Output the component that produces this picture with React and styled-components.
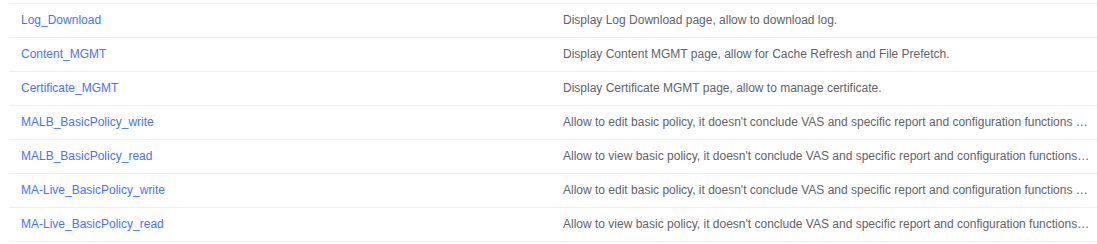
import React from "react";
import styled, { createGlobalStyle } from "styled-components";

const Global = createGlobalStyle`
  html, body { margin: 0; padding: 0; background: #fff; }
  body { font-family: "Liberation Sans", Arial, sans-serif; }
`;

const Wrap = styled.div`
  padding: 3px 0 0 9px;
`;

const Table = styled.div`
  width: 1088px;
  border-top: 1px solid #ebeef5;
`;

const Row = styled.div`
  display: grid;
  grid-template-columns: 542px 1fr;
  height: 33px;
  border-bottom: 1px solid #ebeef5;
  align-items: center;
`;

const Cell = styled.div`
  padding: 0 6px 1px 12px;
  font-size: 12px;
  white-space: nowrap;
  overflow: hidden;
  text-overflow: ellipsis;
  color: ${(p) => (p.$link ? "#4a72f2" : "#606266")};
`;

const rows = [
  ["Log_Download", "Display Log Download page, allow to download log."],
  ["Content_MGMT", "Display Content MGMT page, allow for Cache Refresh and File Prefetch."],
  ["Certificate_MGMT", "Display Certificate MGMT page, allow to manage certificate."],
  ["MALB_BasicPolicy_write", "Allow to edit basic policy, it doesn't conclude VAS and specific report and configuration functions for MALB."],
  ["MALB_BasicPolicy_read", "Allow to view basic policy, it doesn't conclude VAS and specific report and configuration functions for MALB."],
  ["MA-Live_BasicPolicy_write", "Allow to edit basic policy, it doesn't conclude VAS and specific report and configuration functions for MA-Live."],
  ["MA-Live_BasicPolicy_read", "Allow to view basic policy, it doesn't conclude VAS and specific report and configuration functions for MA-Live."],
];

export default function App() {
  return (
    <Wrap>
      <Global />
      <Table>
        {rows.map(([n, d]) => (
          <Row key={n}>
            <Cell $link>{n}</Cell>
            <Cell>{d}</Cell>
          </Row>
        ))}
      </Table>
    </Wrap>
  );
}
